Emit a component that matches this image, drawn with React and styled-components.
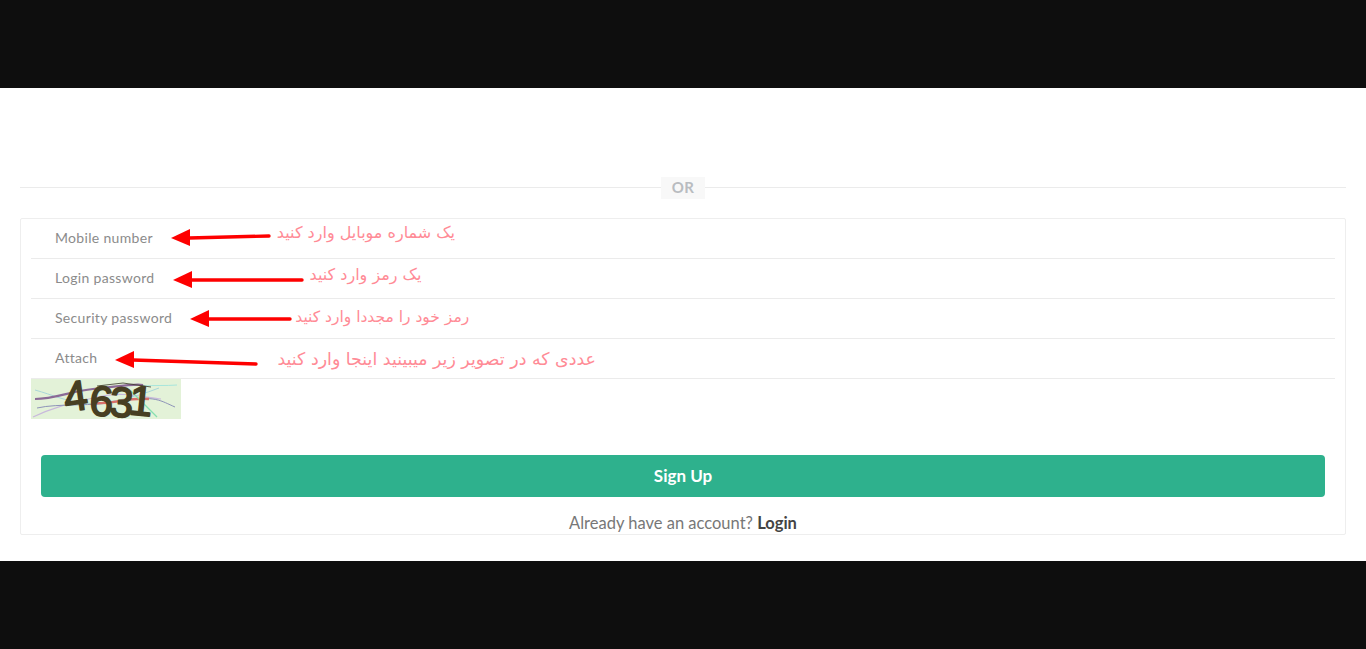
import React from "react";
import styled, { createGlobalStyle } from "styled-components";

const Global = createGlobalStyle`
  html, body { margin: 0; padding: 0; background: #0e0e0e; }
  body { font-family: "Lato", "Noto Sans", "Liberation Sans", sans-serif; }
`;
const Page = styled.div`
  height: 649px;
  padding: 88px 0;
  box-sizing: border-box;
  background: #0e0e0e;
  overflow: hidden;
`;
const Sheet = styled.main`
  height: 473px;
  box-sizing: border-box;
  background: #fff;
  padding: 89px 20px 0;
  display: flex;
  flex-direction: column;
  gap: 19px;
`;
const Divider = styled.div`
  height: 22px;
  display: flex;
  align-items: flex-start;
  &::before, &::after {
    content: "";
    flex: 1;
    height: 1px;
    margin-top: 10px;
    background: #ebebeb;
  }
`;
const OrBadge = styled.span`
  width: 44px;
  height: 22px;
  background: #f8f8f8;
  color: #b9bcc0;
  font-size: 15px;
  font-weight: 700;
  line-height: 21px;
  text-align: center;
  letter-spacing: 0.3px;
`;
const Card = styled.form`
  height: 317px;
  box-sizing: border-box;
  border: 1px solid #eeeeee;
  border-radius: 2px;
  padding: 0 10px;
  display: flex;
  flex-direction: column;
`;
const Row = styled.div`
  height: 40px;
  flex: none;
  box-sizing: border-box;
  border-bottom: 1px solid #ebebeb;
  padding-left: 24px;
  display: flex;
  align-items: center;
`;
const Label = styled.label`
  color: #8b8b8b;
  font-size: 14px;
  letter-spacing: 0.32px;
  margin-bottom: 2px;
`;
const Note = styled.span`
  margin-left: ${(p) => p.$gap}px;
  margin-bottom: ${(p) => p.$lift}px;
  direction: rtl;
  unicode-bidi: isolate;
  white-space: nowrap;
  color: #ff8b96;
  font-family: "DejaVu Sans", sans-serif;
  font-size: ${(p) => p.$size}px;
  line-height: 20px;
`;
const ArrowMark = styled.svg`
  flex: none;
  margin-left: 18px;
`;
const Captcha = styled.svg`
  display: block;
  flex: none;
  width: 150px;
  height: 40px;
  overflow: visible;
`;
const Submit = styled.button`
  display: block;
  flex: none;
  height: 42px;
  margin: 36px 10px 0;
  padding: 0 0 1px;
  border: 0;
  border-radius: 4px;
  background: #2eb18d;
  color: #fff;
  font-family: inherit;
  font-size: 17px;
  font-weight: 700;
`;
const Foot = styled.p`
  margin: 16px 0 0;
  text-align: center;
  color: #777;
  font-size: 16.5px;
  line-height: 20px;
  b { color: #444; font-weight: 700; }
`;

const Arrow = ({ width, tipY, tailY }) => (
  <ArrowMark width={width} height="21" viewBox={`0 0 ${width} 21`}>
    <path d={`M18 ${tipY} L${width - 2} ${tailY}`} stroke="#fe0000" strokeWidth="3.4" strokeLinecap="round" fill="none" />
    <path d={`M0 ${tipY} L19 ${tipY - 9} L19 ${tipY + 8} Z`} fill="#fe0000" />
  </ArrowMark>
);

const Digit = ({ x, y, r, children }) => (
  <text x={x} y={y} transform={`rotate(${r} ${x} ${y})`} fontFamily="Liberation Sans, sans-serif" fontSize="42" fill="#473f22" stroke="#473f22" strokeWidth="1.8" strokeLinejoin="round">{children}</text>
);

const rows = [
  { label: "Mobile number", width: 100, tipY: 10, tailY: 8, note: "یک شماره موبایل وارد کنید", gap: 6, lift: 11, size: 16 },
  { label: "Login password", width: 131, tipY: 12, tailY: 12, note: "یک رمز وارد کنید", gap: 6, lift: 7, size: 16 },
  { label: "Security password", width: 102, tipY: 11, tailY: 11, note: "رمز خود را مجددا وارد کنید", gap: 3, lift: 4, size: 15.5 },
  { label: "Attach", width: 143, tipY: 12, tailY: 16, note: "عددی که در تصویر زیر میبینید اینجا وارد کنید", gap: 19, lift: 0, size: 17.4 },
];

export default function App() {
  return (
    <Page>
      <Global />
      <Sheet>
        <Divider><OrBadge>OR</OrBadge></Divider>
        <Card>
          {rows.map((r) => (
            <Row key={r.label}>
              <Label>{r.label}</Label>
              <Arrow width={r.width} tipY={r.tipY} tailY={r.tailY} />
              <Note $gap={r.gap} $lift={r.lift} $size={r.size}>{r.note}</Note>
            </Row>
          ))}
          <Captcha viewBox="0 0 150 40" role="img" aria-label="4631">
            <rect width="150" height="40" fill="#e3f2d8" />
            <path d="M4 11 C22 16 34 22 52 24 S100 20 128 9" stroke="#a9d6d8" strokeWidth="1" fill="none" />
            <path d="M112 7 C124 6 134 7 146 6" stroke="#a8e6dc" strokeWidth="1" fill="none" />
            <path d="M4 20 C24 20 40 12 62 10 S104 4 112 6" stroke="#8a6a96" strokeWidth="2.2" fill="none" />
            <path d="M2 38 C22 28 42 24 66 18 S112 18 130 20" stroke="#c9b9dc" strokeWidth="1.2" fill="none" />
            <path d="M6 29 C28 24 60 28 92 22 S130 22 144 28" stroke="#8d93b8" strokeWidth="1" fill="none" />
            <path d="M60 24 C80 26 96 18 118 20" stroke="#d9706a" strokeWidth="2.4" fill="none" />
            <path d="M100 12 L126 38" stroke="#86e0b0" strokeWidth="1.2" fill="none" />
            <path d="M66 7 L92 4 L120 8" stroke="#3a3a2a" strokeWidth="0.8" fill="none" />
            <Digit x={35} y={33} r={-8}>4</Digit>
            <Digit x={58} y={36} r={3}>6</Digit>
            <Digit x={78} y={37} r={4}>3</Digit>
            <Digit x={97} y={35} r={6}>1</Digit>
          </Captcha>
          <Submit type="button">Sign Up</Submit>
          <Foot>Already have an account? <b>Login</b></Foot>
        </Card>
      </Sheet>
    </Page>
  );
}
